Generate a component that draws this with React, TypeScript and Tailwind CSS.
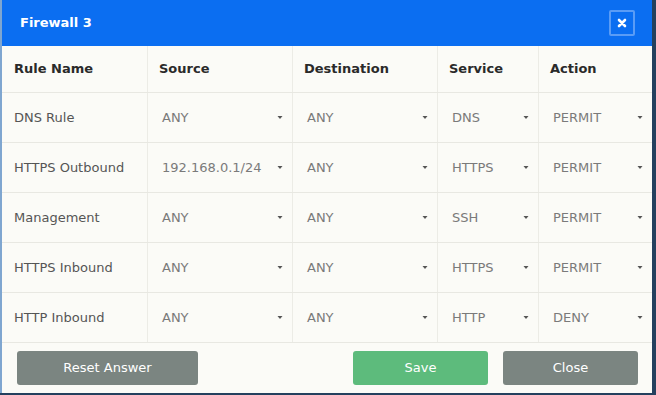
import React from "react";

const rows = [
  ["DNS Rule", "ANY", "ANY", "DNS", "PERMIT"],
  ["HTTPS Outbound", "192.168.0.1/24", "ANY", "HTTPS", "PERMIT"],
  ["Management", "ANY", "ANY", "SSH", "PERMIT"],
  ["HTTPS Inbound", "ANY", "ANY", "HTTPS", "PERMIT"],
  ["HTTP Inbound", "ANY", "ANY", "HTTP", "DENY"],
];

const widths = ["w-[146px]", "w-[145px]", "w-[145px]", "w-[101px]", "flex-1"];

function Arrow() {
  return (
    <svg width="6" height="5" viewBox="0 0 6 5" className="shrink-0">
      <path d="M0.5 1 L5.5 1 L3 4 Z" fill="#555" />
    </svg>
  );
}

export default function App() {
  return (
    <div
      className="w-[656px] h-[395px] bg-[#24405e] flex flex-col overflow-hidden"
      style={{ fontFamily: '"DejaVu Sans", Verdana, sans-serif' }}
    >
      <div className="w-[652px] h-[393px] flex flex-col bg-[#fbfbf7] border-l-2 border-[#7fa6d0]">
        <div className="h-[46px] bg-[#0b6ef1] flex items-center justify-between pl-[18px] pr-[17px]">
          <span className="text-white font-bold text-[13px]">Firewall 3</span>
          <div className="w-[26px] h-[26px] border-2 border-[#5a9cf6] rounded-[2px] flex items-center justify-center">
            <svg width="10" height="10" viewBox="0 0 10 10">
              <path d="M2 2 L8 8 M8 2 L2 8" stroke="white" strokeWidth="2.6" strokeLinecap="round" />
            </svg>
          </div>
        </div>
        <div className="flex h-[47px] border-b border-[#e8e8e2]">
          {["Rule Name", "Source", "Destination", "Service", "Action"].map((h, i) => (
            <div
              key={h}
              className={`${widths[i]} ${i < 4 ? "border-r border-[#ecece6]" : ""} flex items-center ${i === 0 ? "pl-[12px]" : "pl-[11px]"} font-bold text-[13px] text-[#2a2a2a]`}
            >
              {h}
            </div>
          ))}
        </div>
        {rows.map((r, ri) => (
          <div key={ri} className="flex h-[50px] border-b border-[#e8e8e2]">
            {r.map((c, i) => (
              <div
                key={i}
                className={`${widths[i]} ${i < 4 ? "border-r border-[#ecece6]" : ""} flex items-center text-[13px] ${
                  i === 0 ? "pl-[12px] text-[#555]" : "pl-[14px] pr-[9px] justify-between text-[#7a7a7a]"
                }`}
              >
                <span>{c}</span>
                {i > 0 && <Arrow />}
              </div>
            ))}
          </div>
        ))}
        <div className="flex-1 flex items-center pl-[15px] pr-[14px]">
          <button className="w-[181px] h-[34px] rounded-[3px] bg-[#7b8581] text-white text-[13px]">
            Reset Answer
          </button>
          <div className="flex-1" />
          <button className="w-[135px] h-[34px] rounded-[3px] bg-[#5dbb7c] text-white text-[13px]">
            Save
          </button>
          <button className="ml-[15px] w-[135px] h-[34px] rounded-[3px] bg-[#7b8581] text-white text-[13px]">
            Close
          </button>
        </div>
      </div>
    </div>
  );
}
